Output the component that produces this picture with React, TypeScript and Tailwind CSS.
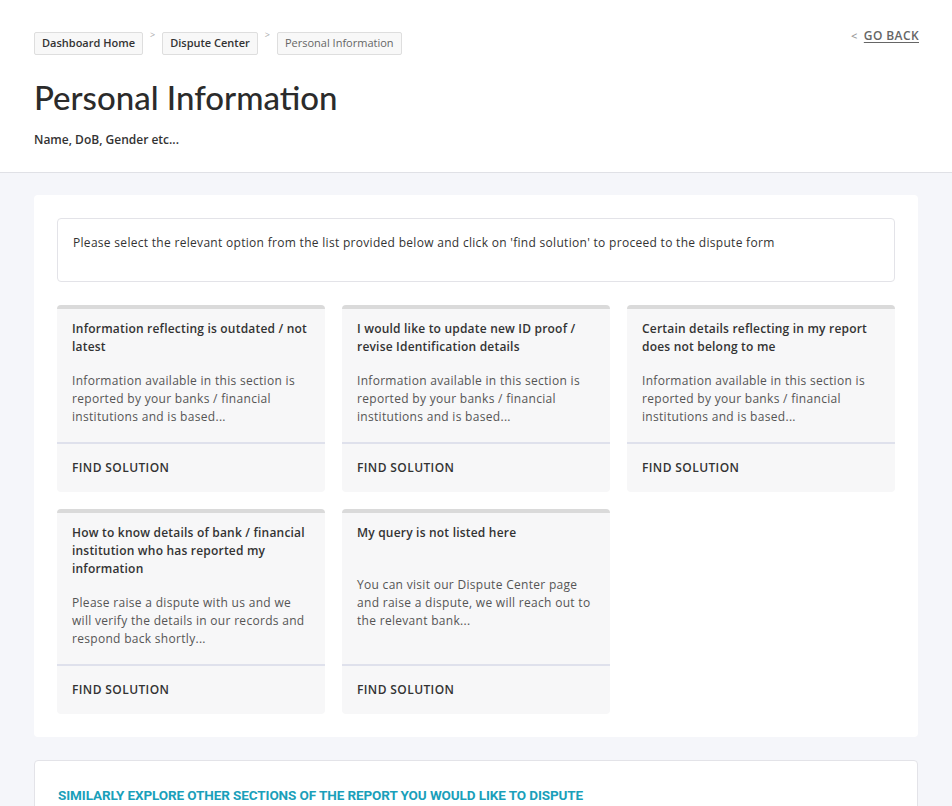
import React from 'react';

type Option = {
  title: string;
  desc: string;
};

const options: Option[] = [
  {
    title: 'Information reflecting is outdated / not latest',
    desc: 'Information available in this section is reported by your banks / financial institutions and is based...',
  },
  {
    title: 'I would like to update new ID proof / revise Identification details',
    desc: 'Information available in this section is reported by your banks / financial institutions and is based...',
  },
  {
    title: 'Certain details reflecting in my report does not belong to me',
    desc: 'Information available in this section is reported by your banks / financial institutions and is based...',
  },
  {
    title: 'How to know details of bank / financial institution who has reported my information',
    desc: 'Please raise a dispute with us and we will verify the details in our records and respond back shortly...',
  },
  {
    title: 'My query is not listed here',
    desc: 'You can visit our Dispute Center page and raise a dispute, we will reach out to the relevant bank...',
  },
];

// Breadcrumb chip
function Crumb({ label, active }: { label: string; active?: boolean }) {
  return (
    <span
      className={
        'h-[23px] px-[7px] flex items-center border border-[#dedede] bg-[#f8f8f8] rounded-[2px] text-[11px] ' +
        (active ? 'text-[#666] font-normal' : 'text-[#333] font-semibold')
      }
    >
      {label}
    </span>
  );
}

function Sep() {
  return <span className="self-start -mt-[4px] mx-[7px] text-[9px] text-[#aaa]">&gt;</span>;
}

// Option card
function OptionCard({ option }: { option: Option }) {
  return (
    <div className="flex flex-col bg-[#f7f7f8] border-t-4 border-[#dadada] rounded-[4px]">
      <div className="flex-1 flex flex-col px-[15px] pt-[11px] pb-[16px]">
        <h3 className="min-h-[36px] text-[12px] leading-[18px] font-semibold text-[#333] tracking-[0.2px]">
          {option.title}
        </h3>
        <p className="mt-[16px] text-[12px] leading-[18px] text-[#555] tracking-[0.3px]">{option.desc}</p>
      </div>
      <div className="h-[50px] border-t-2 border-[#dfe1ec] px-[15px] flex items-center text-[12px] font-semibold text-[#333] tracking-[0.4px]">
        FIND SOLUTION
      </div>
    </div>
  );
}

export default function App() {
  return (
    <div className="min-h-screen bg-[#f5f6fa]" style={{ fontFamily: '"Open Sans", "Noto Sans", sans-serif' }}>
      {/* Header */}
      <header className="bg-white border-b border-[#e0e1e6] px-[34px] pt-[27px] pb-[24px]">
        <div className="flex justify-between items-start">
          <nav className="flex items-center mt-[5px]">
            <Crumb label="Dashboard Home" />
            <Sep />
            <Crumb label="Dispute Center" />
            <Sep />
            <Crumb label="Personal Information" active />
          </nav>
          <a className="flex items-center gap-[6px] text-[12px] font-semibold text-[#666] tracking-[0.4px] -mr-[1px]">
            <span className="text-[11px] text-[#999]">&lt;</span>
            <span className="underline underline-offset-2">GO BACK</span>
          </a>
        </div>
        <h1
          className="mt-[22px] text-[33px] leading-[40px] font-medium text-[#2b2b2b]"
          style={{ fontFamily: 'Lato, sans-serif' }}
        >
          Personal Information
        </h1>
        <p className="mt-[15px] text-[12px] leading-[16px] font-semibold text-[#333]">Name, DoB, Gender etc...</p>
      </header>

      {/* Main */}
      <main className="px-[34px] pt-[22px] pb-[23px]">
        <section className="bg-white rounded-[4px] p-[23px]">
          <div className="h-[64px] border border-[#e3e3e8] rounded-[4px] px-[15px] pt-[16px] text-[12px] leading-[16px] text-[#333] tracking-[0.3px]">
            Please select the relevant option from the list provided below and click on 'find solution' to proceed to
            the dispute form
          </div>
          <div className="mt-[23px] grid grid-cols-3 gap-[17px]">
            {options.map((o, i) => (
              <OptionCard key={i} option={o} />
            ))}
          </div>
        </section>

        <section className="mt-[23px] bg-white border border-[#e3e3e8] rounded-[4px] px-[23px] pt-[24px] pb-[24px]">
          <h2
            className="text-[13.5px] font-bold uppercase text-[#1a9fba] tracking-[-0.1px]"
            style={{ fontFamily: 'Roboto, sans-serif' }}
          >
            Similarly explore other sections of the report you would like to dispute
          </h2>
        </section>
      </main>
    </div>
  );
}
